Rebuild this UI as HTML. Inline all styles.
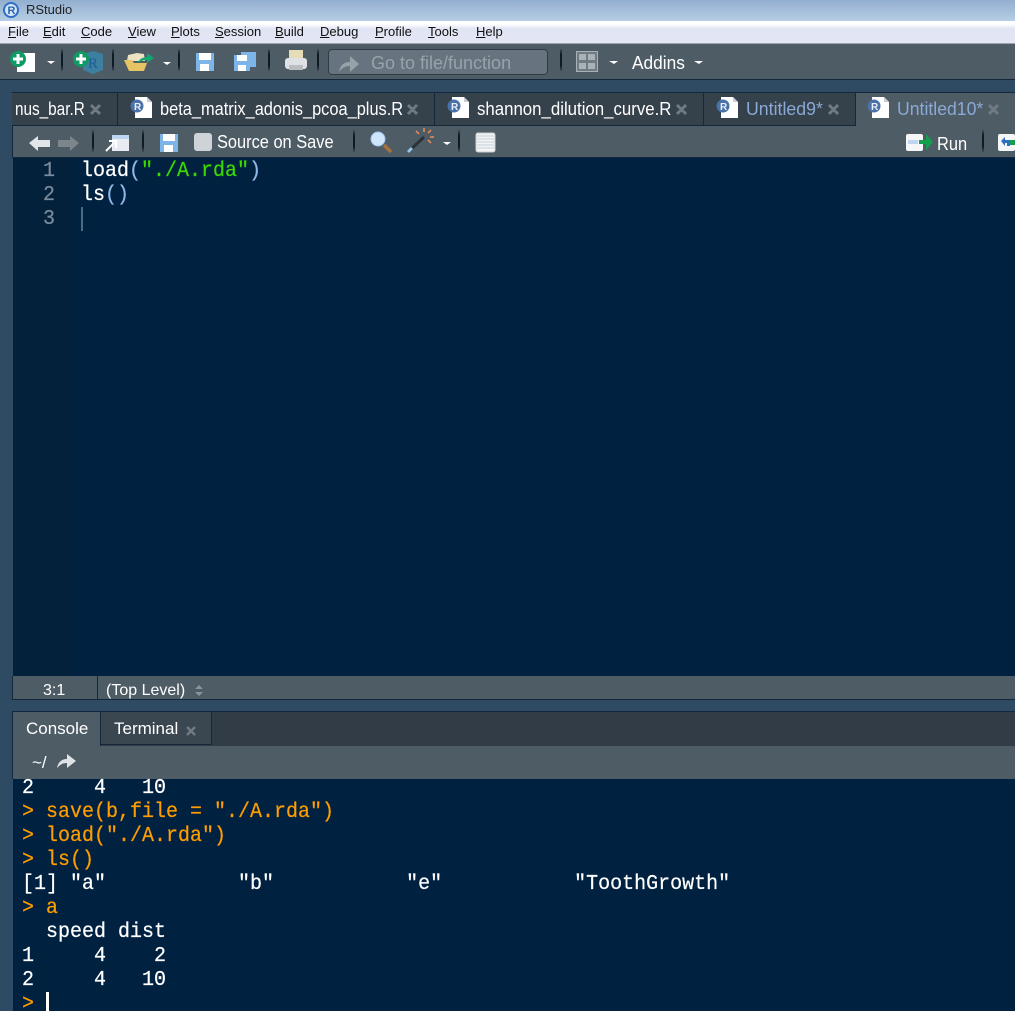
<!DOCTYPE html>
<html><head><meta charset="utf-8"><style>
html,body{margin:0;padding:0;background:#2f4a63;width:1015px;height:1011px;overflow:hidden}
#r{position:relative;width:1015px;height:1011px;overflow:hidden;font-family:"Liberation Sans",sans-serif}
.b{position:absolute}
.t{position:absolute;white-space:pre;line-height:24px}
.m{font-family:"Liberation Mono",monospace;font-size:20px;color:#fff;transform:scaleY(1.07);transform-origin:left 70%;-webkit-text-stroke:.2px currentColor}
.menu{font-size:13px;color:#111;top:21px;line-height:22px}
.menu u{text-decoration:underline}
.ui{font-size:18px;color:#fff}
.n{transform:scaleX(.91);transform-origin:left center}
.sep{position:absolute;width:2px;background:linear-gradient(rgba(14,26,36,.2),#0e1a24 25%,#0e1a24 75%,rgba(14,26,36,.2))}
svg{position:absolute;overflow:visible}
</style></head><body><div id="r">
<div class="b" style="left:0;top:0;width:1015px;height:21px;background:linear-gradient(#93afcf,#b6cee5)"></div>
<div class="b" style="left:0;top:21px;width:1015px;height:23px;background:linear-gradient(#fff 0,#fff 3px,#e0e4f3 8px,#e3e7f5 100%)"></div>
<div class="b" style="left:0;top:43px;width:1015px;height:1px;background:#a0a4ac"></div>
<svg style="left:2px;top:1px" width="18" height="18"><circle cx="9" cy="9" r="8" fill="#2f6fc4"/><circle cx="9" cy="9" r="6" fill="#d8e6f6"/><text x="5.5" y="13" font-size="11" font-weight="700" fill="#2a66b4" font-family="Liberation Sans">R</text></svg>
<span class="t" style="left:26px;top:-2px;font-size:13px;color:#222">RStudio</span>

<span class="t menu" style="left:8px"><u>F</u>ile</span>
<span class="t menu" style="left:43px"><u>E</u>dit</span>
<span class="t menu" style="left:81px"><u>C</u>ode</span>
<span class="t menu" style="left:128px"><u>V</u>iew</span>
<span class="t menu" style="left:171px"><u>P</u>lots</span>
<span class="t menu" style="left:215px"><u>S</u>ession</span>
<span class="t menu" style="left:275px"><u>B</u>uild</span>
<span class="t menu" style="left:320px"><u>D</u>ebug</span>
<span class="t menu" style="left:375px"><u>P</u>rofile</span>
<span class="t menu" style="left:428px"><u>T</u>ools</span>
<span class="t menu" style="left:476px"><u>H</u>elp</span>

<div class="b" style="left:0;top:44px;width:1015px;height:35px;background:#4e5c66"></div>
<div class="b" style="left:0;top:79px;width:1015px;height:1px;background:#13283c"></div>

<svg style="left:0;top:44px" width="1015" height="36">
<rect x="17" y="9" width="18" height="19" fill="#fff"/><circle cx="18" cy="15" r="8" fill="#0d9a63"/><path d="M18 10v10M13 15h10" stroke="#fff" stroke-width="3"/>
<path d="M47 17h8l-4 3z" fill="#fff"/>
<path d="M83 10l10-3 10 3v16l-10 4-10-4z" fill="#3d7f9f"/><text x="88" y="24" font-size="15" fill="#1d5c96" font-family="Liberation Serif">R</text><circle cx="81" cy="15" r="8" fill="#0d9a63"/><path d="M81 10v10M76 15h10" stroke="#fff" stroke-width="3"/>
<path d="M127 17l1-6 9-2 7 1 1 7z" fill="#ece3c2"/><path d="M124 16h8l2 3h13l-3 8h-15z" fill="#e6c463"/><path d="M138 19c1-4 5-6 9-6V9l7 5-7 5v-3c-4 0-6 1-9 3z" fill="#12a772"/>
<path d="M163 18h8l-4 3z" fill="#fff"/>
<rect x="196" y="9" width="18" height="18" fill="#7eb5e9"/><rect x="199" y="9" width="12" height="7" fill="#fff"/><rect x="200" y="20" width="9" height="7" fill="#fff"/>
<rect x="241" y="8" width="15" height="15" fill="#7eb5e9"/><rect x="234" y="11" width="16" height="16" fill="#7eb5e9"/><rect x="237" y="11" width="10" height="6" fill="#fff"/><rect x="238" y="21" width="8" height="6" fill="#fff"/>
<rect x="289" y="6" width="14" height="10" fill="#e7dcb8"/><rect x="285" y="14" width="22" height="11" rx="3" fill="#dfe2e4"/><rect x="289" y="21" width="14" height="5" fill="#b9bdc0"/>
<rect x="576.5" y="7.5" width="21" height="20" fill="#6f7b83" stroke="#a9b1b6"/><rect x="579" y="10" width="7" height="6" fill="#aab2b7"/><rect x="588" y="10" width="7" height="6" fill="#aab2b7"/><rect x="579" y="19" width="7" height="6" fill="#aab2b7"/><rect x="588" y="19" width="7" height="6" fill="#aab2b7"/>
<path d="M609 17h9l-4 3zM694 17h9l-4 3z" fill="#fff"/>
</svg>
<div class="sep" style="left:61px;top:49px;height:22px"></div>
<div class="sep" style="left:112px;top:49px;height:22px"></div>
<div class="sep" style="left:178px;top:49px;height:22px"></div>
<div class="sep" style="left:268px;top:49px;height:22px"></div>
<div class="sep" style="left:317px;top:49px;height:22px"></div>
<div class="sep" style="left:560px;top:49px;height:22px"></div>
<div class="b" style="left:328px;top:49px;width:218px;height:24px;background:#677480;border:1px solid #2f3b45;border-radius:4px"></div>
<svg style="left:339px;top:53px" width="20" height="20"><path d="M0 19c1-7 5-10 11-10V3l9 8-9 8v-6c-5 0-8 2-11 6z" fill="#98a1a8"/></svg>
<span class="t" style="left:371px;top:51px;font-size:18px;color:#98a2a9">Go to file/function</span>
<span class="t ui" style="left:632px;top:51px;transform:scaleX(.96);transform-origin:left center">Addins</span>

<div class="b" style="left:12px;top:92px;width:1003px;height:34px;background:#35414b;border-top:1px solid #13283c;box-sizing:border-box"></div>
<div class="b" style="left:12px;top:125px;width:843px;height:1px;background:#13283c"></div>
<div class="b" style="left:855px;top:92px;width:160px;height:34px;background:#4e5c66;border-top:1px solid #13283c;border-left:1px solid #13283c;box-sizing:border-box"></div>
<div class="b" style="left:117px;top:93px;width:1px;height:32px;background:#13283c"></div>
<div class="b" style="left:434px;top:93px;width:1px;height:32px;background:#13283c"></div>
<div class="b" style="left:703px;top:93px;width:1px;height:32px;background:#13283c"></div>
<svg width="0" height="0"><defs><g id="f"><path d="M4 0h12l5 5v16H4z" fill="#fff"/><path d="M16 0l5 5h-5z" fill="#c9ced3"/><circle cx="6" cy="9" r="6.5" fill="#4a71a8"/><text x="3" y="13" font-size="10" font-weight="700" fill="#e8eef6" font-family="Liberation Sans">R</text></g></defs></svg>
<svg style="left:131px;top:97px" width="21" height="21"><use href="#f"/></svg>
<svg style="left:448px;top:97px" width="21" height="21"><use href="#f"/></svg>
<svg style="left:717px;top:97px" width="21" height="21"><use href="#f"/></svg>
<svg style="left:868px;top:97px" width="21" height="21"><use href="#f"/></svg>
<span class="t ui n" style="left:15px;top:97px;transform:scaleX(.85)">nus_bar.R</span>
<span class="t ui n" style="left:160px;top:97px">beta_matrix_adonis_pcoa_plus.R</span>
<span class="t ui n" style="left:477px;top:97px;transform:scaleX(.934)">shannon_dilution_curve.R</span>
<span class="t ui n" style="left:746px;top:97px;color:#8aa9d6;transform:scaleX(.985)">Untitled9*</span>
<span class="t ui n" style="left:897px;top:97px;color:#8aa9d6;transform:scaleX(.98)">Untitled10*</span>
<svg style="left:0;top:92px" width="1015" height="34" stroke="#6f7a82" stroke-width="3" fill="none"><path d="M91 13l9 9M100 13l-9 9M408 13l9 9M417 13l-9 9M677 13l9 9M686 13l-9 9M829 13l9 9M838 13l-9 9M989 13l9 9M998 13l-9 9"/></svg>

<div class="b" style="left:12px;top:126px;width:1003px;height:32px;background:#4e5c66"></div>
<div class="b" style="left:12px;top:126px;width:1px;height:32px;background:#13283c"></div>
<div class="b" style="left:12px;top:157px;width:1003px;height:1px;background:#13283c"></div>
<svg style="left:0;top:126px" width="1015" height="32">
<path d="M29 17l9-7v4h12v7H38v4z" fill="#e3e6e8"/><path d="M79 17l-9-7v4H58v7h12v4z" fill="#7b858c"/>
<path d="M112 9h17v16h-17z" fill="#e8ecf2"/><path d="M112 9h17v4h-17z" fill="#bcd6f2"/><path d="M106 25l8-8M109 15h7v7" stroke="#fff" stroke-width="2" fill="none"/>
<rect x="160" y="8" width="18" height="18" fill="#7eb5e9"/><rect x="163" y="8" width="12" height="7" fill="#fff"/><rect x="164" y="19" width="9" height="7" fill="#fff"/>
<rect x="194" y="7" width="18" height="18" rx="3" fill="#ced3d7"/>
<circle cx="378" cy="13" r="7" fill="#cfe6fa" stroke="#9fc7ec"/><path d="M384 19l7 7" stroke="#a8703a" stroke-width="3.5"/>
<path d="M408 26l16-15" stroke="#2c3338" stroke-width="3"/><path d="M408 26l4-4" stroke="#8fc6ee" stroke-width="3"/><path d="M424 2v4M431 4l-3 3M416 5l3 3M434 11h-4M431 17l-3-3" stroke="#ee8c5a" stroke-width="1.5"/>
<path d="M443 16h8l-4 3z" fill="#fff"/>
<rect x="476" y="7" width="19" height="19" rx="2" fill="#f3f4f4" stroke="#c9cdd0"/><path d="M477 10h17M477 13h17M477 16h17M477 19h17M477 22h17" stroke="#c6d2dc"/>
<rect x="906" y="8" width="17" height="17" rx="2" fill="#f4f6f8"/><rect x="908" y="14" width="10" height="4" fill="#bcd6f2"/><path d="M919 14h7v-6l7 8-7 8v-6h-7z" fill="#12a04f"/>
<rect x="998" y="8" width="17" height="17" rx="2" fill="#f4f6f8"/><path d="M1001 15l4-4v3h5v6h-3v-3h-2v3z" fill="#2f6fc4"/><rect x="1010" y="14" width="5" height="5" fill="#12a04f"/>
</svg>
<div class="sep" style="left:92px;top:130px;height:22px"></div>
<div class="sep" style="left:142px;top:130px;height:22px"></div>
<div class="sep" style="left:353px;top:130px;height:22px"></div>
<div class="sep" style="left:458px;top:130px;height:22px"></div>
<div class="sep" style="left:982px;top:130px;height:22px"></div>
<span class="t ui n" style="left:217px;top:130px">Source on Save</span>
<span class="t ui n" style="left:937px;top:132px">Run</span>

<div class="b" style="left:13px;top:158px;width:1002px;height:518px;background:#002240"></div>
<div class="b" style="left:13px;top:158px;width:61px;height:518px;background:#04213c"></div>
<span class="t m" style="left:43px;top:160px;color:#7a8b9a">1</span>
<span class="t m" style="left:43px;top:184px;color:#7a8b9a">2</span>
<span class="t m" style="left:43px;top:208px;color:#7a8b9a">3</span>
<span class="t m" style="left:81px;top:160px">load<span style="color:#8fb8e8">(</span><span style="color:#3ad900">"./A.rda"</span><span style="color:#8fb8e8">)</span></span>
<span class="t m" style="left:81px;top:184px">ls<span style="color:#8fb8e8">()</span></span>
<div class="b" style="left:81px;top:207px;width:2px;height:24px;background:#4c6a84"></div>

<div class="b" style="left:12px;top:676px;width:1003px;height:24px;background:#4e5c66;border-left:1px solid #13283c;border-bottom:1px solid #13283c;box-sizing:border-box"></div>
<div class="b" style="left:97px;top:676px;width:1px;height:23px;background:#13283c"></div>
<span class="t" style="left:43px;top:679px;font-size:16px;color:#fff">3:1</span>
<span class="t" style="left:106px;top:679px;font-size:16px;color:#fff">(Top Level)</span>
<svg style="left:194px;top:684px" width="10" height="14"><path d="M1 5l4-4 4 4zM1 8l4 4 4-4z" fill="#8a949b"/></svg>

<div class="b" style="left:12px;top:711px;width:1003px;height:35px;background:#313c46;border-top:1px solid #13283c;box-sizing:border-box"></div>
<div class="b" style="left:12px;top:712px;width:89px;height:34px;background:#4e5c66;border-left:1px solid #13283c;border-right:1px solid #13283c;box-sizing:border-box"></div>
<div class="b" style="left:101px;top:712px;width:111px;height:33px;background:#3a4650;border-right:1px solid #13283c;border-bottom:1px solid #13283c;box-sizing:border-box"></div>
<span class="t" style="left:26px;top:717px;font-size:17px;color:#fff">Console</span>
<span class="t" style="left:114px;top:717px;font-size:17px;color:#fff">Terminal</span>
<svg style="left:186px;top:726px" width="10" height="10"><path d="M1 1l8 8M9 1l-8 8" stroke="#6f7a82" stroke-width="2.5"/></svg>
<div class="b" style="left:12px;top:746px;width:1003px;height:33px;background:#4e5c66;border-left:1px solid #13283c;box-sizing:border-box"></div>
<span class="t" style="left:32px;top:751px;font-size:17px;color:#fff">~/</span>
<svg style="left:57px;top:754px" width="19" height="15"><path d="M0 14c1-6 5-9 10-9V0l9 7-9 7V9c-5 0-7 2-10 5z" fill="#e0e3e5"/></svg>

<div class="b" style="left:13px;top:779px;width:1002px;height:232px;background:#002240"></div>
<span class="t m" style="left:22px;top:777px">2     4   10</span>
<span class="t m" style="left:22px;top:801px;color:#ff9d00">&gt; save(b,file = "./A.rda")</span>
<span class="t m" style="left:22px;top:825px;color:#ff9d00">&gt; load("./A.rda")</span>
<span class="t m" style="left:22px;top:849px;color:#ff9d00">&gt; ls()</span>
<span class="t m" style="left:22px;top:873px">[1] "a"           "b"           "e"           "ToothGrowth"</span>
<span class="t m" style="left:22px;top:897px;color:#ff9d00">&gt; a</span>
<span class="t m" style="left:22px;top:921px">  speed dist</span>
<span class="t m" style="left:22px;top:945px">1     4    2</span>
<span class="t m" style="left:22px;top:969px">2     4   10</span>
<span class="t m" style="left:22px;top:993px;color:#ff9d00">&gt;</span>
<div class="b" style="left:46px;top:992px;width:3px;height:19px;background:#fff"></div>
</div></body></html>
